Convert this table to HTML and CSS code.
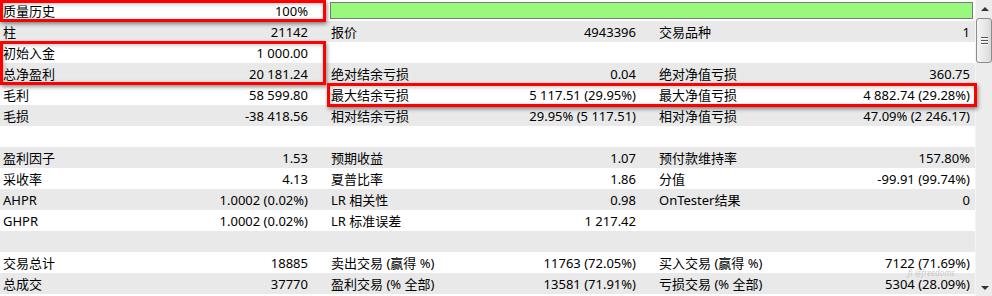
FILE: index.html
```html
<!DOCTYPE html>
<html>
<head>
<meta charset="utf-8">
<link rel="stylesheet" href="styles.css">
</head>
<body>
<div class="page">
  <div class="report">
    <div class="row">
      <div class="cell"><span>质量历史</span><span>100%</span></div>
      <div class="barcell"><div class="bar"></div></div>
    </div>
    <div class="row">
      <div class="cell"><span>柱</span><span>21142</span></div>
      <div class="cell"><span>报价</span><span>4943396</span></div>
      <div class="cell last"><span>交易品种</span><span>1</span></div>
    </div>
    <div class="row">
      <div class="cell"><span>初始入金</span><span>1 000.00</span></div>
      <div class="cell"></div>
      <div class="cell last"></div>
    </div>
    <div class="row">
      <div class="cell"><span>总净盈利</span><span>20 181.24</span></div>
      <div class="cell"><span>绝对结余亏损</span><span>0.04</span></div>
      <div class="cell last"><span>绝对净值亏损</span><span>360.75</span></div>
    </div>
    <div class="row">
      <div class="cell"><span>毛利</span><span>58 599.80</span></div>
      <div class="cell"><span>最大结余亏损</span><span>5 117.51 (29.95%)</span></div>
      <div class="cell last"><span>最大净值亏损</span><span>4 882.74 (29.28%)</span></div>
    </div>
    <div class="row">
      <div class="cell"><span>毛损</span><span>-38 418.56</span></div>
      <div class="cell"><span>相对结余亏损</span><span>29.95% (5 117.51)</span></div>
      <div class="cell last"><span>相对净值亏损</span><span>47.09% (2 246.17)</span></div>
    </div>
    <div class="row"></div>
    <div class="row">
      <div class="cell"><span>盈利因子</span><span>1.53</span></div>
      <div class="cell"><span>预期收益</span><span>1.07</span></div>
      <div class="cell last"><span>预付款维持率</span><span>157.80%</span></div>
    </div>
    <div class="row">
      <div class="cell"><span>采收率</span><span>4.13</span></div>
      <div class="cell"><span>夏普比率</span><span>1.86</span></div>
      <div class="cell last"><span>分值</span><span>-99.91 (99.74%)</span></div>
    </div>
    <div class="row">
      <div class="cell"><span>AHPR</span><span>1.0002 (0.02%)</span></div>
      <div class="cell"><span>LR 相关性</span><span>0.98</span></div>
      <div class="cell last"><span>OnTester结果</span><span>0</span></div>
    </div>
    <div class="row">
      <div class="cell"><span>GHPR</span><span>1.0002 (0.02%)</span></div>
      <div class="cell"><span>LR 标准误差</span><span>1 217.42</span></div>
      <div class="cell last"></div>
    </div>
    <div class="row"></div>
    <div class="row">
      <div class="cell"><span>交易总计</span><span>18885</span></div>
      <div class="cell"><span>卖出交易 (赢得 %)</span><span>11763 (72.05%)</span></div>
      <div class="cell last"><span>买入交易 (赢得 %)</span><span>7122 (71.69%)</span></div>
    </div>
    <div class="row">
      <div class="cell"><span>总成交</span><span>37770</span></div>
      <div class="cell"><span>盈利交易 (% 全部)</span><span>13581 (71.91%)</span></div>
      <div class="cell last"><span>亏损交易 (% 全部)</span><span>5304 (28.09%)</span></div>
    </div>

    <div class="hl hl-quality"></div>
    <div class="hl hl-balance"></div>
    <div class="hl hl-drawdown"></div>
    <div class="watermark">ƒ) @freedoms</div>
  </div>
  <div class="scrollbar">
    <div class="sb-btn"><span class="arrow-up"></span></div>
    <div class="sb-thumb"><span class="grip"></span><span class="grip"></span><span class="grip"></span></div>
    <div class="sb-track"></div>
    <div class="sb-btn"><span class="arrow-down"></span></div>
  </div>
</div>
</body>
</html>
```

FILE: styles.css
```css
html, body {
  margin: 0;
  padding: 0;
  background: #ffffff;
}

body {
  font-family: "Noto Sans", "Noto Sans CJK SC", sans-serif;
  font-size: 13px;
  color: #000;
}

.page {
  display: flex;
  width: 992px;
  height: 296px;
  overflow: hidden;
}

.report {
  position: relative;
  width: 975px;
  flex: none;
}

.row {
  display: grid;
  grid-template-columns: 328px 328px 319px;
  height: 21px;
  background: #ffffff;
}

.row:nth-child(even) {
  background: #e9e9e9;
}

.cell {
  display: flex;
  justify-content: space-between;
  align-items: center;
  padding: 0 20px 0 3px;
  white-space: nowrap;
}

.cell span {
  line-height: 14px;
}

.cell.last {
  padding-right: 5px;
}

.barcell {
  grid-column: 2 / 4;
  padding: 2px 2px 2px 2px;
}

.bar {
  height: 15px;
  background: #99f97e;
  border: 1px solid #7a7a7a;
}

.hl {
  position: absolute;
  border: 3px solid #ff0000;
  box-shadow: 1px 2px 4px rgba(0, 0, 0, 0.45), inset 1px 1px 4px rgba(0, 0, 0, 0.25);
  pointer-events: none;
}

.hl-quality {
  left: 0;
  top: 0;
  width: 320px;
  height: 16px;
}

.hl-balance {
  left: 0;
  top: 41px;
  width: 320px;
  height: 38px;
}

.hl-drawdown {
  left: 327px;
  top: 83px;
  width: 644px;
  height: 18px;
}

.watermark {
  position: absolute;
  left: 907px;
  top: 270px;
  height: 6px;
  font-size: 8px;
  line-height: 6px;
  color: rgba(170, 170, 170, 0.6);
  white-space: nowrap;
  font-style: italic;
}

.scrollbar {
  width: 17px;
  flex: none;
  display: flex;
  flex-direction: column;
  background: #ececec;
  border-left: 1px solid #f4f4f4;
}

.sb-btn {
  height: 17px;
  flex: none;
  display: flex;
  align-items: center;
  justify-content: center;
}

.arrow-up {
  width: 0;
  height: 0;
  border-left: 4px solid transparent;
  border-right: 4px solid transparent;
  border-bottom: 4px solid #333;
}

.arrow-down {
  width: 0;
  height: 0;
  border-left: 4px solid transparent;
  border-right: 4px solid transparent;
  border-top: 4px solid #333;
}

.sb-thumb {
  margin: 1px 1px 0 0;
  height: 43px;
  flex: none;
  border: 1px solid #8c8c8c;
  border-radius: 3px;
  background: linear-gradient(to right, #f4f4f4, #e6e6e6 60%, #d8d8d8);
  display: flex;
  flex-direction: column;
  align-items: center;
  justify-content: center;
  gap: 2px;
}

.grip {
  display: block;
  width: 7px;
  height: 1px;
  background: #555;
  box-shadow: 0 1px 0 #fdfdfd;
}

.sb-track {
  flex: 1;
}
```
